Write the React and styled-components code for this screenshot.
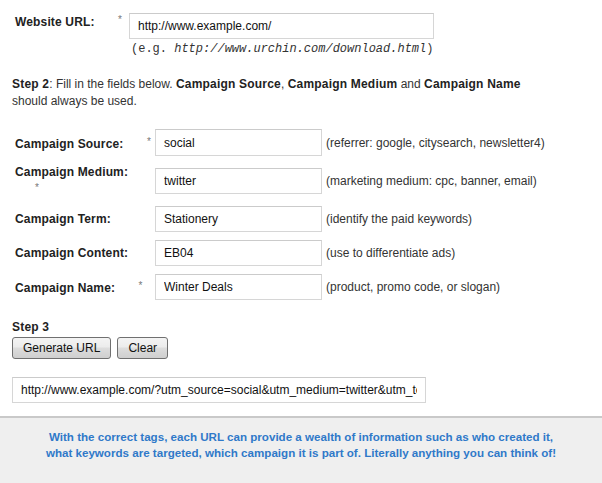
import styled, { createGlobalStyle } from 'styled-components';

const GlobalStyle = createGlobalStyle`
  html, body {
    margin: 0;
    padding: 0;
    background: #fff;
  }
  body {
    font-family: "Liberation Sans", Arial, sans-serif;
    font-size: 12px;
    color: #222;
  }
`;

const Page = styled.div`
  width: 602px;
  height: 483px;
  display: flex;
  flex-direction: column;
  overflow: hidden;
`;

const Main = styled.div`
  padding: 11px 0 0 12px;
  flex: 1;
`;

const UrlRow = styled.div`
  display: flex;
  align-items: flex-start;
  padding-left: 3px;
`;

const Label = styled.div`
  width: ${(p) => p.$width}px;
  flex-shrink: 0;
  font-weight: bold;
  font-size: 12px;
  line-height: ${(p) => p.$line || 17}px;
  color: #222;
  letter-spacing: 0.15px;
`;

const Req = styled.span`
  padding-left: 20px;
  font-weight: normal;
  font-size: 10px;
  color: #777;
  vertical-align: 3px;
`;

const TextBox = styled.input`
  box-sizing: border-box;
  width: ${(p) => p.$width}px;
  height: ${(p) => p.$height || 26}px;
  margin: ${(p) => p.$top || 0}px 0 0;
  padding: 0 8px;
  border: 1px solid #d6d6d6;
  border-top-color: #cbcbcb;
  background: #fff;
  font-family: "Liberation Sans", Arial, sans-serif;
  font-size: 12px;
  color: #111;
  outline: none;
`;

const Example = styled.div`
  margin: 3px 0 0 119px;
  font-family: "Liberation Mono", "Courier New", monospace;
  font-size: 12px;
  line-height: 14px;
  color: #333;

  em {
    font-style: italic;
  }
`;

const StepText = styled.p`
  margin: ${(p) => p.$top}px 0 0;
  font-size: 12px;
  line-height: 17px;
  color: #333;

  b {
    color: #222;
    letter-spacing: 0.2px;
  }
`;

const Fields = styled.div`
  display: flex;
  flex-direction: column;
  gap: 8px;
  margin-top: 19px;
  padding-left: 3px;
`;

const FieldRow = styled.div`
  display: grid;
  grid-template-columns: 140px 167px auto;
  align-items: center;
  min-height: 26px;
`;

const Hint = styled.span`
  padding-left: 4px;
  font-size: 12px;
  color: #333;
`;

const Buttons = styled.div`
  display: flex;
  gap: 6px;
  margin-top: 1px;
`;

const Button = styled.button`
  height: 22px;
  padding: 0 10px;
  border: 1px solid #707070;
  border-radius: 3px;
  background: linear-gradient(#f4f4f4 0%, #ececec 45%, #dddddd 50%, #cfcfcf 100%);
  font-family: "Liberation Sans", Arial, sans-serif;
  font-size: 12px;
  color: #111;
`;

const Result = styled.div`
  margin-top: 18px;
`;

const Footer = styled.div`
  border-top: 2px solid #c9c9c9;
  margin-top: 11px;
  background: #efefef;
  height: 67px;
  box-sizing: border-box;
  padding-top: 11px;
  text-align: center;
  font-weight: bold;
  font-size: 11.6px;
  line-height: 16px;
  color: #2f79c9;
`;

const fields = [
  { label: 'Campaign Source:', req: true, value: 'social', hint: '(referrer: google, citysearch, newsletter4)' },
  { label: 'Campaign Medium:', req: true, value: 'twitter', hint: '(marketing medium: cpc, banner, email)' },
  { label: 'Campaign Term:', value: 'Stationery', hint: '(identify the paid keywords)' },
  { label: 'Campaign Content:', value: 'EB04', hint: '(use to differentiate ads)' },
  { label: 'Campaign Name:', req: true, value: 'Winter Deals', hint: '(product, promo code, or slogan)' },
];

export default function App() {
  return (
    <Page>
      <GlobalStyle />
      <Main>
        <UrlRow>
          <Label $width={114}>
            Website URL:{' '}<Req>*</Req>
          </Label>
          <TextBox $width={305} $top={2} defaultValue="http://www.example.com/" readOnly />
        </UrlRow>
        <Example>
          (e.g. <em>http://www.urchin.com/download.html</em>)
        </Example>

        <StepText $top={20}>
          <b>Step 2</b>: Fill in the fields below. <b>Campaign Source</b>, <b>Campaign Medium</b> and{' '}
          <b>Campaign Name</b>
          <br />
          should always be used.
        </StepText>

        <Fields>
          {fields.map((f, i) => (
            <FieldRow key={f.label}>
              <Label $width={136} $line={16}>
                {f.label}
                {f.req && (
                  <>
                    {' '}
                    <Req>*</Req>
                  </>
                )}
              </Label>
              <TextBox $width={167} $height={i === 0 ? 27 : 26} defaultValue={f.value} readOnly />
              <Hint>{f.hint}</Hint>
            </FieldRow>
          ))}
        </Fields>

        <StepText $top={19}>
          <b>Step 3</b>
        </StepText>
        <Buttons>
          <Button>Generate URL</Button>
          <Button>Clear</Button>
        </Buttons>

        <Result>
          <TextBox
            $width={414}
            $height={26}
            defaultValue="http://www.example.com/?utm_source=social&utm_medium=twitter&utm_term=Stationery&utm_content=EB04&utm_campaign=Winter%20Deals"
            readOnly
          />
        </Result>
      </Main>
      <Footer>
        With the correct tags, each URL can provide a wealth of information such as who created it,
        <br />
        what keywords are targeted, which campaign it is part of. Literally anything you can think of!
      </Footer>
    </Page>
  );
}
